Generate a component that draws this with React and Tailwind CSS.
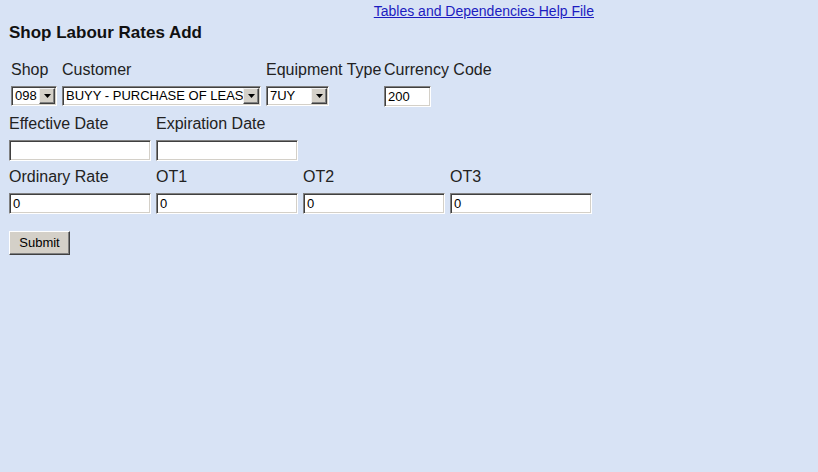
import React from 'react';

const font = { fontFamily: '"Liberation Sans", Arial, sans-serif' };

function TextBox({ value = '', width }) {
  return (
    <div
      className={`${width} h-[21px] bg-white border border-t-[#808080] border-l-[#808080] border-b-white border-r-white shadow-[inset_1px_1px_0_#404040,inset_-1px_-1px_0_#d4d0c8] pl-[3px] flex items-center text-[13px] text-black leading-none overflow-hidden whitespace-nowrap`}
    >
      {value}
    </div>
  );
}

function Select({ value, width }) {
  return (
    <div
      className={`${width} h-[20px] bg-white border border-t-[#808080] border-l-[#808080] border-b-white border-r-white shadow-[inset_1px_1px_0_#404040,inset_-1px_-1px_0_#d4d0c8] flex items-stretch p-[1px] pl-[3px]`}
    >
      <span className="flex-1 overflow-hidden whitespace-nowrap text-[13px] leading-[16px] text-black">{value}</span>
      <span className="w-[16px] shrink-0 bg-[#d4d0c8] border border-t-[#f2f2f2] border-l-[#f2f2f2] border-b-[#404040] border-r-[#404040] shadow-[inset_-1px_-1px_0_#808080] flex items-center justify-center">
        <svg width="7" height="4" viewBox="0 0 7 4">
          <path d="M0 0h7L3.5 4z" fill="#000" />
        </svg>
      </span>
    </div>
  );
}

function Field({ label, children, width }) {
  return (
    <div className={`${width} shrink-0 flex flex-col`}>
      <div className="text-[16px] leading-[18px] mb-[7px] whitespace-nowrap text-[#222]">{label}</div>
      {children}
    </div>
  );
}

export default function App() {
  return (
    <div className="min-h-screen w-full bg-[#d8e3f5] text-black" style={font}>
      <div className="w-[594px] flex justify-end pt-[3px]">
        <a href="#" className="text-[14px] leading-[16px] text-[#1c1cc0] underline">
          Tables and Dependencies Help File
        </a>
      </div>

      <h1 className="pl-[9px] mt-[4px] text-[17px] leading-[19px] font-bold text-[#111]">Shop Labour Rates Add</h1>

      <div className="flex pl-[11px] mt-[19px]">
        <Field label="Shop" width="w-[51px]">
          <Select value="098" width="w-[46px]" />
        </Field>
        <Field label="Customer" width="w-[204px]">
          <Select value="BUYY - PURCHASE OF LEASE" width="w-[199px]" />
        </Field>
        <Field label="Equipment Type" width="w-[118px]">
          <Select value="7UY" width="w-[63px]" />
        </Field>
        <Field label="Currency Code" width="w-[120px]">
          <TextBox value="200" width="w-[47px]" />
        </Field>
      </div>

      <div className="flex gap-[5px] pl-[9px] mt-[8px]">
        <Field label="Effective Date" width="w-[142px]">
          <TextBox width="w-[142px]" />
        </Field>
        <Field label="Expiration Date" width="w-[142px]">
          <TextBox width="w-[142px]" />
        </Field>
      </div>

      <div className="flex gap-[5px] pl-[9px] mt-[7px]">
        <Field label="Ordinary Rate" width="w-[142px]">
          <TextBox value="0" width="w-[142px]" />
        </Field>
        <Field label="OT1" width="w-[142px]">
          <TextBox value="0" width="w-[142px]" />
        </Field>
        <Field label="OT2" width="w-[142px]">
          <TextBox value="0" width="w-[142px]" />
        </Field>
        <Field label="OT3" width="w-[142px]">
          <TextBox value="0" width="w-[142px]" />
        </Field>
      </div>

      <div className="pl-[9px] mt-[16px]">
        <button
          type="submit"
          className="w-[61px] h-[24px] bg-[#d4d0c8] border border-t-white border-l-white border-b-[#404040] border-r-[#404040] shadow-[inset_-1px_-1px_0_#808080] text-[13px] leading-none text-black"
        >
          Submit
        </button>
      </div>
    </div>
  );
}
